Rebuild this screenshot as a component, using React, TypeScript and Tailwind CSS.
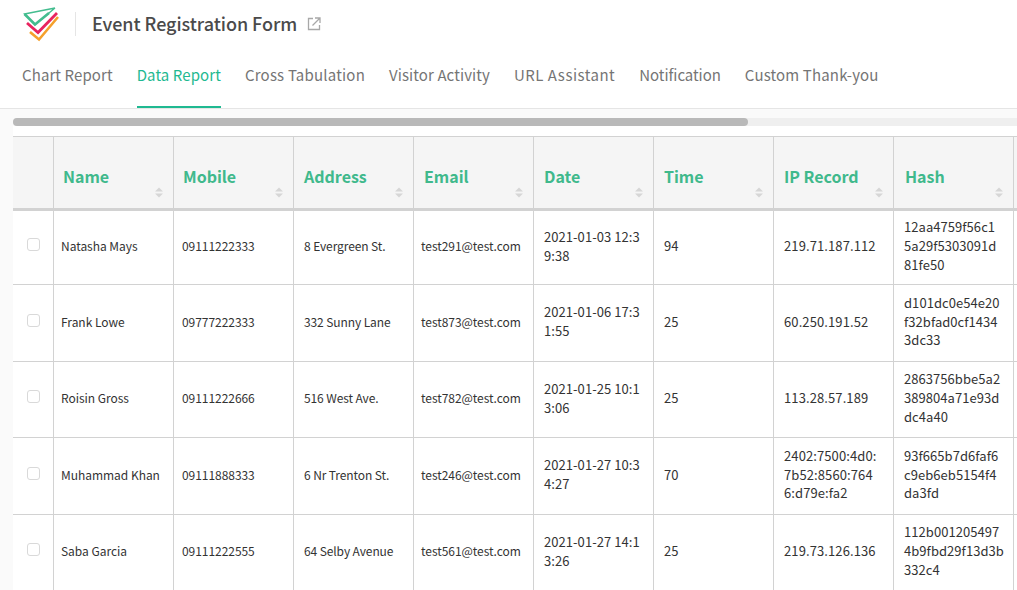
import React from "react";

const tabs = [
  { t: "Chart Report", c: "tracking-[0.1px]" },
  { t: "Data Report", c: "tracking-[0.1px]" },
  { t: "Cross Tabulation", c: "tracking-[0.2px]" },
  { t: "Visitor Activity", c: "tracking-[0.1px]" },
  { t: "URL Assistant", c: "tracking-[0.5px]" },
  { t: "Notification", c: "tracking-[-0.05px]" },
  { t: "Custom Thank-you", c: "tracking-[0.15px]" },
];
const cols = [
  { t: "Name", pl: "pl-[9px]" },
  { t: "Mobile", pl: "pl-[9px]" },
  { t: "Address", pl: "pl-[10px]" },
  { t: "Email", pl: "pl-[10px]" },
  { t: "Date", pl: "pl-[10px]" },
  { t: "Time", pl: "pl-[10px]" },
  { t: "IP Record", pl: "pl-[10px]" },
  { t: "Hash", pl: "pl-[11px]" },
];
const cellCls = [
  "pl-[7px] pr-[2px] text-[12px] tracking-[-0.03px]",
  "pl-[8px] pr-[2px] text-[12px] tracking-[-0.05px]",
  "pl-[10px] pr-[2px] text-[12px] tracking-[-0.1px]",
  "pl-[7px] pr-[2px] text-[12px] tracking-[-0.05px]",
  "pl-[10px] pr-[4px] text-[13px] tracking-[0.05px]",
  "pl-[10px] pr-[4px] text-[13px] tracking-[0.05px]",
  "pl-[10px] pr-[4px] text-[13px] tracking-[0.1px]",
  "pl-[10px] pr-[4px] text-[13px] tracking-[0.05px]",
];
const rows = [
  { h: "h-[74px]", c: ["Natasha Mays", "09111222333", "8 Evergreen St.", "test291@test.com", "2021-01-03 12:3\n9:38", "94", "219.71.187.112", "12aa4759f56c1\n5a29f5303091d\n81fe50"] },
  { h: "h-[77px]", c: ["Frank Lowe", "09777222333", "332 Sunny Lane", "test873@test.com", "2021-01-06 17:3\n1:55", "25", "60.250.191.52", "d101dc0e54e20\nf32bfad0cf1434\n3dc33"] },
  { h: "h-[76px]", c: ["Roisin Gross", "09111222666", "516 West Ave.", "test782@test.com", "2021-01-25 10:1\n3:06", "25", "113.28.57.189", "2863756bbe5a2\n389804a71e93d\ndc4a40"] },
  { h: "h-[77px]", c: ["Muhammad Khan", "09111888333", "6 Nr Trenton St.", "test246@test.com", "2021-01-27 10:3\n4:27", "70", "2402:7500:4d0:\n7b52:8560:764\n6:d79e:fa2", "93f665b7d6faf6\nc9eb6eb5154f4\nda3fd"] },
  { h: "h-[76px]", c: ["Saba Garcia", "09111222555", "64 Selby Avenue", "test561@test.com", "2021-01-27 14:1\n3:26", "25", "219.73.126.136", "112b001205497\n4b9fbd29f13d3b\n332c4"] },
];

function Sort() {
  return (
    <svg width="8" height="11" viewBox="0 0 8 11" className="absolute right-[10px] bottom-[10px]">
      <path d="M4 0.5 L8 4.5 H0 Z" fill="#d6d6d6" />
      <path d="M4 10.5 L8 6.5 H0 Z" fill="#d6d6d6" />
    </svg>
  );
}

export default function App() {
  return (
    <div className="w-[1017px] h-[590px] overflow-hidden bg-[#fafafa] flex flex-col" style={{ fontFamily: '"Noto Sans CJK SC", "Noto Sans", sans-serif' }}>
      <div className="bg-white shrink-0">
        <div className="h-[47px] flex items-center pl-[22px]">
          <svg width="38" height="36" viewBox="0 0 38 36" className="shrink-0">
            <path d="M8 26 L17 33.5 L36 11" fill="none" stroke="#f5a02c" strokeWidth="2.6" />
            <path d="M5 17 L16 26.5 L35 7" fill="none" stroke="#e8245f" strokeWidth="2.8" />
            <path d="M2.5 8 L33 2 L13 18.5 Z" fill="#fff" stroke="none" />
            <path d="M33 2 L2.5 8 L13 18.5 L33 2" fill="none" stroke="#43bd8f" strokeWidth="1.4" />
            <path d="M2.5 8 L13 18.5 L27 7" fill="none" stroke="#43bd8f" strokeWidth="2.6" />
          </svg>
          <div className="w-px h-[24px] bg-[#e5e5e5] ml-[15px] mr-[16px]" />
          <span className="text-[18px] font-medium text-[#4a4a4a] leading-none tracking-[-0.05px] mb-[2px]">Event Registration Form</span>
          <svg width="14" height="14" viewBox="0 0 14 14" className="ml-[10px]" fill="none" stroke="#a8a8a8" strokeWidth="1.3">
            <path d="M6 1.5 H1.5 V12.5 H12.5 V8" />
            <path d="M5.5 8.5 L12.5 1.5 M8 1 H13 V6" />
          </svg>
        </div>
        <div className="h-[62px] flex items-start pl-[22px] gap-[24px] border-b border-[#e5e5e5]">
          {tabs.map((t, i) => (
            <div key={t.t} className={`h-[61px] pt-[17px] text-[15px] leading-[22px] ${t.c} ${i === 1 ? "text-[#1fb991] border-b-2 border-[#1fb991]" : "text-[#757575]"}`}>
              {t.t}
            </div>
          ))}
        </div>
      </div>
      <div className="ml-[13px] flex-1 min-h-0 flex flex-col">
        <div className="pt-[9px] shrink-0">
          <div className="h-[8px] bg-[#efefef] rounded-l-[5px]">
            <div className="h-full w-[735px] bg-[#b9b9b9] rounded-[5px]" />
          </div>
        </div>
        <div className="flex-1 min-h-0 bg-white pt-[10px]">
          <div className="border-t border-[#d2d2d2] flex h-[75px] bg-[#f5f5f5] border-b-[3px] border-b-[#d2d2d2]">
            <div className="w-[41px] border-r border-[#d2d2d2] shrink-0" />
            {cols.map((c) => (
              <div key={c.t} className={`relative w-[120px] shrink-0 border-r border-[#d2d2d2] ${c.pl} pt-[27px] text-[16px] font-bold leading-[24px] text-[#40b98c]`}>
                {c.t}
                <Sort />
              </div>
            ))}
          </div>
          {rows.map((r) => (
            <div key={r.c[0]} className={`flex ${r.h} border-b border-[#d2d2d2] text-[#333333]`}>
              <div className="w-[41px] shrink-0 border-r border-[#d2d2d2] flex items-center justify-center pb-[6px]">
                <div className="w-[13px] h-[13px] border border-[#d9d9d9] rounded-[3px] bg-white" />
              </div>
              {r.c.map((v, i) => (
                <div key={i} className={`w-[120px] shrink-0 border-r border-[#d2d2d2] flex items-center pb-[2px] ${cellCls[i]} leading-[18.7px]`}>
                  <span className="whitespace-pre-line">{v}</span>
                </div>
              ))}
            </div>
          ))}
        </div>
      </div>
    </div>
  );
}
